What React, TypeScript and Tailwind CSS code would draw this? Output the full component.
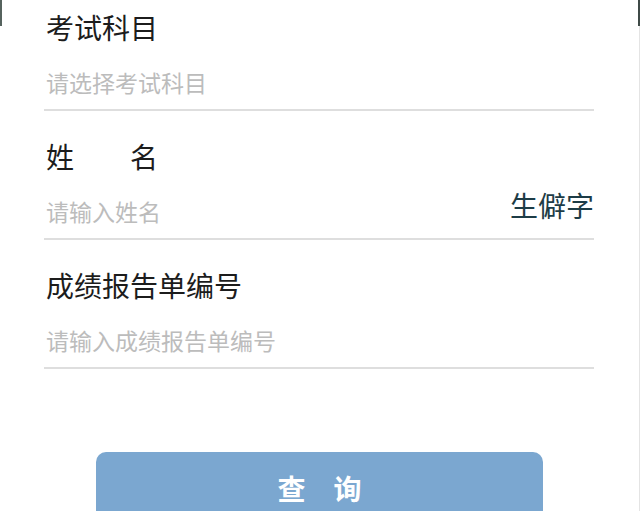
import React from 'react';

const fields = [
  { label: '考试科目', placeholder: '请选择考试科目' },
  { label: '姓　　名', placeholder: '请输入姓名', extra: '生僻字' },
  { label: '成绩报告单编号', placeholder: '请输入成绩报告单编号' },
];

export default function App() {
  return (
    <div
      className="relative w-[640px] h-[511px] overflow-hidden bg-white"
      style={{ fontFamily: '"Noto Sans CJK SC", "Noto Sans", sans-serif' }}
    >
      {/* edge marks from the cropped screenshot */}
      <div className="absolute left-0 top-0 w-[2px] h-[26px] bg-[#56635e]" />
      <div className="absolute right-0 top-0 w-[2px] h-[26px] bg-[#3f4a47]" />
      <div className="absolute right-0 top-[26px] w-[1px] h-[485px] bg-[#e4e4e4]" />

      <div className="pl-[44px] w-[594px] pt-[13px] pb-[1px]">
        {fields.map((f, i) => (
          <div
            key={f.label}
            className={`border-b-[2px] border-[#dedede] pb-[15px] ${i < fields.length - 1 ? 'mb-[31px]' : ''}`}
          >
            <div className="pl-[2px] text-[28px] leading-[28px] text-[#1c1c1c] whitespace-pre">
              {f.label}
            </div>
            <div className="mt-[28px] pl-[2px] h-[25px] flex items-center justify-between">
              <span className="text-[23px] leading-[24px] text-[#bcbcbc]">{f.placeholder}</span>
              {f.extra && (
                <span className="text-[28px] leading-[28px] text-[#1d3c46] -translate-y-[6px]">
                  {f.extra}
                </span>
              )}
            </div>
          </div>
        ))}
      </div>

      <div className="mt-[82px] ml-[96px] w-[447px] h-[70px] rounded-[10px] bg-[#7ba7d0] flex justify-center pt-[22px]">
        <span className="text-[28px] leading-[28px] font-bold text-white whitespace-pre">查　询</span>
      </div>
    </div>
  );
}
